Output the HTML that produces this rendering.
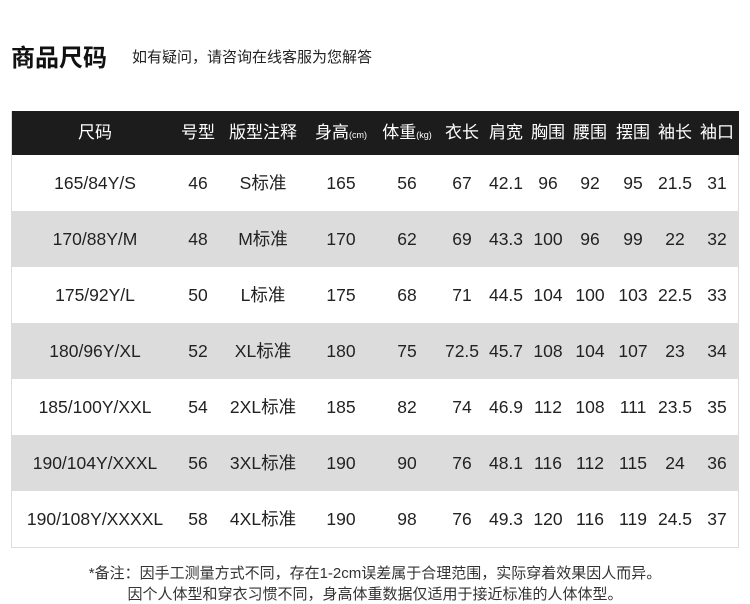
<!DOCTYPE html><html><head><meta charset="utf-8"><style>
*{margin:0;padding:0;box-sizing:border-box}
body{width:750px;height:600px;background:#fff;font-family:"Liberation Sans","Noto Sans CJK SC",sans-serif;color:#222;position:relative;overflow:hidden}
.t{position:absolute;left:11px;top:38px;font-size:24px;font-weight:bold;color:#111}
.s{position:absolute;left:132px;top:46px;font-size:15px;color:#222}
.tb{position:absolute;left:11px;top:111px;width:728px;height:437px;border:1px solid #ddd;border-top:none}
.row{position:absolute;left:0;width:727px;height:56px}
.row span{position:absolute;top:0;line-height:56px;transform:translateX(-50%);white-space:nowrap;font-size:17.5px;color:#222}
.h{background:#1c1c1c;height:44px;top:0}
.h span{line-height:44px;color:#fff;font-size:17px}
.g{background:#dcdcdc}
small{font-size:9px}
.f{position:absolute;left:0;width:750px;text-align:center;font-size:15px;color:#333}
</style></head><body>
<div class="t">商品尺码</div>
<div class="s">如有疑问，请咨询在线客服为您解答</div>
<div class="tb">
<div class="row h"><span style="left:83px">尺码</span><span style="left:186px">号型</span><span style="left:251px">版型注释</span><span style="left:329px">身高<small>(cm)</small></span><span style="left:395px">体重<small>(kg)</small></span><span style="left:450px">衣长</span><span style="left:494px">肩宽</span><span style="left:536px">胸围</span><span style="left:578px">腰围</span><span style="left:621px">摆围</span><span style="left:663px">袖长</span><span style="left:705px">袖口</span></div>
</div>
<script>
var d=[["165/84Y/S",46,"S标准",165,56,67,"42.1",96,92,95,"21.5",31],["170/88Y/M",48,"M标准",170,62,69,"43.3",100,96,99,22,32],["175/92Y/L",50,"L标准",175,68,71,"44.5",104,100,103,"22.5",33],["180/96Y/XL",52,"XL标准",180,75,"72.5","45.7",108,104,107,23,34],["185/100Y/XXL",54,"2XL标准",185,82,74,"46.9",112,108,111,"23.5",35],["190/104Y/XXXL",56,"3XL标准",190,90,76,"48.1",116,112,115,24,36],["190/108Y/XXXXL",58,"4XL标准",190,98,76,"49.3",120,116,119,"24.5",37]];
var x=[83,186,251,329,395,450,494,536,578,621,663,705],tb=document.querySelector('.tb'),h='';
d.forEach(function(r,i){h+='<div class="row'+(i%2?' g':'')+'" style="top:'+(44+i*56)+'px">';r.forEach(function(c,j){h+='<span style="left:'+x[j]+'px">'+c+'</span>'});h+='</div>'});
tb.insertAdjacentHTML('beforeend',h);
</script>
<div class="f" style="top:562px">*备注：因手工测量方式不同，存在1-2cm误差属于合理范围，实际穿着效果因人而异。</div>
<div class="f" style="top:583px">因个人体型和穿衣习惯不同，身高体重数据仅适用于接近标准的人体体型。</div>
</body></html>
